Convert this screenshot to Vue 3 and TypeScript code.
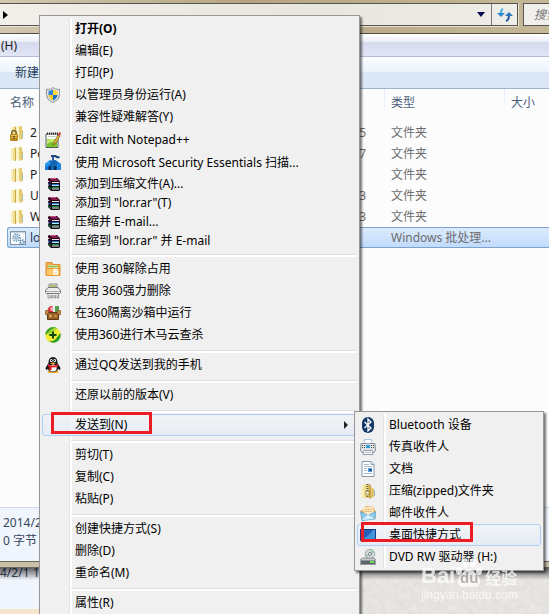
<script setup lang="ts">
interface FileRow { icon: string; name: string; date: string; type: string; selected?: boolean }
interface MenuItem { label: string; icon?: string; bold?: boolean; open?: boolean; marked?: boolean }
interface MenuGroup { size: string; items: MenuItem[] }

const folder = '<path d="M1 3l5-2v14l-5-1z" fill="#efdf94"/><path d="M1 3l2-1v12l-2-.5z" fill="#f8efbd"/><path d="M5 2l6-1v11l-6 3z" fill="#f3e39c"/><path d="M5 2h1v13H5z" fill="#c9a949"/><path d="M6 2l3-.5v12L6 15z" fill="#fbf3c4"/><path d="M9 1.500l3-.5v11l-3 2z" fill="#e5cc73"/><path d="M12 5l1 1v7l-1 1-3 1 3-3z" fill="#d4b45a"/><path d="M12.500 8v4" stroke="#9cc4c4"/>'
const books = '<path d="M3 3l1-1h8l3 3v9l-1 1H6l-3-3z" fill="#140c14"/><path d="M4 2h7l3 3H7z" fill="#8e1650"/><path d="M5 2.500h6" stroke="#c2517f"/><path d="M3 4l3 2.500" stroke="#b0124e"/><path d="M7 6.500h7" stroke="#f3dbe4"/><path d="M14.500 5v2" stroke="#8e1650"/><path d="M3 7l3 2.500" stroke="#2a49c8"/><path d="M7 8.500h7" stroke="#2f6fd8"/><path d="M7 9.500h7" stroke="#a9f0f4"/><path d="M3 10.500L6 13" stroke="#118a4a"/><path d="M7 11.500h7" stroke="#1c9350"/><path d="M7 13h7" stroke="#e6f7e9"/><path d="M3.500 5v1M3.500 8.500v1" stroke="#e8e8e8"/>'

const icons: Record<string, string> = {
  folder,
  locked: folder + '<path d="M1.800 10V8q0-2.500 2.200-2.500T6.200 8v2" fill="none" stroke="#7d6428" stroke-width="1.500"/><rect x="0" y="9" width="8" height="7" rx="1" fill="#b98a22"/><path d="M1 10.500h6M1 12.500h6" stroke="#e4c257"/><path d="M4 11v3" stroke="#5d3e08"/>',
  batch: '<rect x=".5" y="1.500" width="15" height="13" fill="#fafcff" stroke="#8797a9"/><path d="M1 2.500h14" stroke="#c7d4e2"/><circle cx="6.500" cy="7.500" r="3.500" fill="none" stroke="#6c94b5" stroke-width="1.500" stroke-dasharray="1.500 .8"/><circle cx="6.500" cy="7.500" r="1.600" fill="#d9e9f4" stroke="#5681a5"/><circle cx="12" cy="12" r="2" fill="#dcecf5" stroke="#4c7899" stroke-width="1.500" stroke-dasharray="1.300 .8"/>',
  shield: '<path d="M8 0l2 1.500 5 .5v5q0 6-7 9-7-3-7-9V2l5-.5z" fill="#8d949b"/><path d="M8 1l2 1.300 4 .7v4q0 5-6 8-6-3-6-8V3l4-.7z" fill="#e1e5e8"/><path d="M8 2.500V8H3.500V4z" fill="#2f86d6"/><path d="M8 2.500L12.500 4v4H8z" fill="#ffd53b"/><path d="M3.500 8H8v5.500Q4 11.500 3.500 8z" fill="#fcc61c"/><path d="M8 8h4.500q-.5 3.500-4.500 5.500z" fill="#1c70c6"/>',
  notepad: '<path d="M1 2h12v13.500H1z" fill="#fdfdfd" stroke="#565b57"/><path d="M2 1.500h11" stroke="#222" stroke-width="2" stroke-dasharray="1 1"/><path d="M3 4.500h8" stroke="#c5cfc8"/><path d="M2 7h10v8H2z" fill="#7cc22a"/><path d="M2 8q5-2 10 0v2Q6 9 2 12z" fill="#c2e86a"/><path d="M8 12l5-9 2 1-5 8-2 1z" fill="#f1bf35" stroke="#6d5424" stroke-width=".7"/><path d="M13 2.500L14.500 0 16 1l-1 3z" fill="#d2402c"/>',
  castle: '<path d="M0 9l5-4 2 1V1h1v4l4 1 4 3v6H0z" fill="#1478d8"/><path d="M6 0h5l1 1 3 .5-1 2-3-.5-1-1H6z" fill="#1d4683"/><path d="M7 2v4l2-1V2z" fill="#2c5b98"/><path d="M0 9l5-4v4l-5 3z" fill="#2e9bf0"/><path d="M5 6l6-1 1 3v7H5z" fill="#1464b4"/><path d="M12 7l4 2v6h-4z" fill="#2085de"/><path d="M3.500 15v-3q1.200-2 2.500 0v3zM9 15v-3q1.200-2 2.500 0v3z" fill="#062a5a"/>',
  books,
  orange: '<path d="M1 1.500h6l1 2h7v11H1z" fill="#f0a848" stroke="#dd9434"/><path d="M3 4h10v3H3z" fill="#fff7cf"/><path d="M3 5.500h10" stroke="#9cbf52" stroke-width="2"/><path d="M1.500 7.500h13v7h-13z" fill="#fbc86a" stroke="#e69a35"/><path d="M12.500 8.500H9v4.500h3.500v-2.500H9" fill="none" stroke="#fff" stroke-width="1.300"/>',
  shredder: '<path d="M4 5V1h8v5" fill="#e9efdf" stroke="#888"/><path d="M5 3h6" stroke="#b0bd6c" stroke-width="2"/><path d="M3 4.500h10l2.500 3v2l-1 1h-13l-1-1v-2z" fill="#ededed" stroke="#777"/><path d="M1 8.500h14" stroke="#a8a8a8"/><path d="M3 11v4h2v-3M6 12v3h1.500v-3M9 12v3h1.500v-3M12 12v3h1.500v-4" fill="none" stroke="#858585" stroke-width=".8"/>',
  sandbox: '<path d="M3 5q0-4 4-4l3 3v4H3z" fill="#d8303c"/><path d="M5 3q2-2 3 0v3H6z" fill="#f5a9bb"/><path d="M10 1h4v6h-4z" fill="#52a357"/><path d="M8 2h2v5H8z" fill="#e5f1ed"/><path d="M2.500 7.500h11v7h-11z" fill="#9b6124" stroke="#5f3a15"/><path d="M0 6l3-1 1 2-2 3-2-1zM16 6l-3-1-1 2 2 3 2-1z" fill="#c48a47" stroke="#7b4d20" stroke-width=".7"/><path d="M4 11h3M9 11h3M5.500 9.500v3" stroke="#e4b777"/>',
  plus360: '<circle cx="8" cy="8" r="7.800" fill="#f3ea38"/><path d="M3 2Q8-2 13 2 8 0 5 4q-4 4-4.500 4Q0 5 3 2z" fill="#33a52c"/><path d="M15.500 6q1 6-4 9-4 2-8-1 5 1 8-3 3-4 4-5z" fill="#2a9d26"/><path d="M4 4q4-3 8-1-5 1-9 6z" fill="#9bd631"/><path d="M8 4.500v7M4.500 8h7" stroke="#0a4a10" stroke-width="2"/>',
  qq: '<ellipse cx="8" cy="14.500" rx="5.500" ry="1.500" fill="#f2a819"/><path d="M3.500 6q0-6 4.500-6t4.500 6l3 5-.5 2-2-1q-1 3-5 3t-5-3l-2 1-.5-2z" fill="#15161a"/><ellipse cx="8" cy="11" rx="3.700" ry="3.500" fill="#fff"/><ellipse cx="6.300" cy="3.500" rx="1.300" ry="1.500" fill="#fff"/><ellipse cx="9.700" cy="3.500" rx="1.300" ry="1.500" fill="#fff"/><path d="M6.500 3v1M9.500 3v1" stroke="#111"/><path d="M5 6q3-1 6 0L8 7.500z" fill="#f8b324"/><path d="M3 7q5 3 10 0v2.500q-5 2-10 0z" fill="#e22424"/><path d="M4 9h2.500v4H4z" fill="#cf1b1b"/>',
  bluetooth: '<rect x="2" width="12" height="16" rx="6" fill="#123769"/><path d="M4.500 5l6.500 6-3 3V2l3 3-6.500 6" fill="none" stroke="#fff" stroke-width="1.300"/>',
  fax: '<path d="M4.500 5V.5h7V5" fill="#fff" stroke="#b7c3ce"/><path d="M1 4.500h14l.5 7-1.500 2H2L.5 11.500z" fill="#dfe2e4" stroke="#8a949b"/><path d="M6 6h4v3H6z" fill="#3aa0dc"/><path d="M2 6.500h3M2 8.500h3M11 6.500h3M11 8.500h3" stroke="#555" stroke-dasharray="1 1"/><path d="M4 11.500h8l1 4H3z" fill="#fff" stroke="#8f9daa"/><path d="M5 13.500h6" stroke="#adbbc6"/>',
  document: '<path d="M2 .5h9l3 3v12H2z" fill="#fff" stroke="#8498a8"/><path d="M11 .5v3h3" fill="#d8e7f2" stroke="#8ca0af"/><path d="M4 3.500h5M4 5.500h8M4 7.500h3M4 9.500h3M4 12.500h8" stroke="#a9bccf"/><path d="M8 7h4v4H8z" fill="#5ea2dc"/><path d="M9 8h3v2H9z" fill="#1e5da8"/>',
  zip: '<path d="M1 3l4-2v13l-4 1z" fill="#f8efbd"/><path d="M4 2l2-1 4 1v13H4z" fill="#ecd98a"/><path d="M9 1l2 1v13l-2 1z" fill="#c9a949"/><path d="M11 4l3 2v8l-3 1z" fill="#e0c469"/><path d="M14.500 7v6" stroke="#8fb7ba"/><path d="M7.500 1v14" stroke="#6d6132" stroke-width="2" stroke-dasharray="1 1"/><path d="M6 8h3v4H6z" fill="#f8f4d8" stroke="#86712e" stroke-width=".7"/>',
  mail: '<path d="M.5 6L6 1l7 .5L15.500 6v8L2 15.500z" fill="#eeb25c"/><path d="M2.500 3l10-1.500L14 9l-9 3z" fill="#fdeecb"/><path d="M4 5l8-1M4 7l8-1" stroke="#e8b774"/><path d="M.5 6.500L8 10.500l7.500-4-.5 7.500-13 1.500z" fill="#8fcaeb" stroke="#4d99c6" stroke-width=".7"/><path d="M2 15l6-5.500 6.500 4.500z" fill="#d3effb"/>',
  desktop: '<path d="M0 2h16v12H0z" fill="#173d87"/><path d="M1 3h14v9H1z" fill="#2460bb"/><path d="M1 12Q9 10 13 3h2v9z" fill="#3f93dc"/><path d="M0 13.500h16" stroke="#50734e"/>',
  dvd: '<circle cx="10" cy="5" r="4.800" fill="#d3dad8" stroke="#8a9494" stroke-width=".7"/><path d="M10 5l1-4.500 3.500 3z" fill="#9ed2b1"/><path d="M10 5L6 8l-.7-2z" fill="#8fbfa5"/><circle cx="10" cy="5" r="1.500" fill="#fff" stroke="#778"/><path d="M2 9h12l2 2v4.500H0V11z" fill="#c3c8ca" stroke="#747a80" stroke-width=".7"/><path d="M1 11.500h14V15H1z" fill="#5d646a"/><path d="M10 13h4" stroke="#62e34e" stroke-width="2"/>',
}

const files: FileRow[] = [
  { icon: 'locked', name: '2', date: '5', type: '文件夹' },
  { icon: 'folder', name: 'Po', date: '7', type: '文件夹' },
  { icon: 'folder', name: 'P', date: '', type: '文件夹' },
  { icon: 'folder', name: 'U', date: '3', type: '文件夹' },
  { icon: 'folder', name: 'W', date: '3', type: '文件夹' },
  { icon: 'batch', name: 'lo', date: '', type: 'Windows 批处理...', selected: true },
]

const groups: MenuGroup[] = [
  { size: 'regular', items: [
    { label: '打开(O)', bold: true }, { label: '编辑(E)' }, { label: '打印(P)' },
    { label: '以管理员身份运行(A)', icon: 'shield' }, { label: '兼容性疑难解答(Y)' },
  ] },
  { size: 'tall', items: [
    { label: 'Edit with Notepad++', icon: 'notepad' },
    { label: '使用 Microsoft Security Essentials 扫描...', icon: 'castle' },
  ] },
  { size: 'short', items: [
    { label: '添加到压缩文件(A)...', icon: 'books' }, { label: '添加到 "lor.rar"(T)', icon: 'books' },
    { label: '压缩并 E-mail...', icon: 'books' }, { label: '压缩到 "lor.rar" 并 E-mail', icon: 'books' },
  ] },
  { size: 'regular ruled', items: [
    { label: '使用 360解除占用', icon: 'orange' }, { label: '使用 360强力删除', icon: 'shredder' },
    { label: '在360隔离沙箱中运行', icon: 'sandbox' }, { label: '使用360进行木马云查杀', icon: 'plus360' },
  ] },
  { size: 'regular ruled', items: [{ label: '通过QQ发送到我的手机', icon: 'qq' }] },
  { size: 'regular ruled', items: [{ label: '还原以前的版本(V)' }] },
  { size: 'regular ruled', items: [{ label: '发送到(N)', open: true, marked: true }] },
  { size: 'regular ruled', items: [{ label: '剪切(T)' }, { label: '复制(C)' }, { label: '粘贴(P)' }] },
  { size: 'regular ruled', items: [{ label: '创建快捷方式(S)' }, { label: '删除(D)' }, { label: '重命名(M)' }] },
  { size: 'regular ruled', items: [{ label: '属性(R)' }] },
]

const targets: MenuItem[] = [
  { label: 'Bluetooth 设备', icon: 'bluetooth' }, { label: '传真收件人', icon: 'fax' },
  { label: '文档', icon: 'document' }, { label: '压缩(zipped)文件夹', icon: 'zip' },
  { label: '邮件收件人', icon: 'mail' }, { label: '桌面快捷方式', icon: 'desktop', open: true, marked: true },
  { label: 'DVD RW 驱动器 (H:)', icon: 'dvd' },
]
</script>

<template>
  <div class="screen">
    <header class="address-row">
      <div class="address">
        <button class="crumb" aria-label="▶"><svg width="5" height="8" viewBox="0 0 5 8"><path d="M0 0l5 4-5 4z" fill="#000" /></svg></button>
        <button class="history" aria-label="▼"><svg width="8" height="5" viewBox="0 0 8 5"><path d="M0 0h8L4 5z" fill="#06064e" /></svg></button>
        <button class="refresh" aria-label="↻">
          <svg width="16" height="14" viewBox="0 0 16 14"><path d="M6 1Q3.500 2 4 6" fill="none" stroke="#46b2df" stroke-width="2" /><path d="M0 5h8L4 9z" fill="#2f86c9" /><path d="M9 13q3-1 3-6" fill="none" stroke="#24569f" stroke-width="2" /><path d="M8 8l4-4 4 4z" fill="#2c77c3" /></svg>
        </button>
      </div>
      <input class="search" type="text" placeholder="搜索" aria-label="搜索">
    </header>
    <nav class="menubar"><button>(H)</button></nav>
    <div class="toolbar"><button>新建</button></div>
    <main class="listing">
      <table>
        <thead><tr><th class="name">名称</th><th class="date"></th><th class="type">类型</th><th>大小</th></tr></thead>
        <tbody>
          <tr v-for="(file, i) in files" :key="i" :class="{ selected: file.selected }">
            <td class="name"><span class="file"><svg width="16" height="16" viewBox="0 0 16 16" v-html="icons[file.icon]" />{{ file.name }}</span></td>
            <td class="date">{{ file.date }}</td>
            <td class="type">{{ file.type }}</td>
            <td></td>
          </tr>
        </tbody>
      </table>
    </main>
    <footer class="details"><span>2014/2</span><span>0 字节</span></footer>
    <div class="frame"></div>
    <div class="behind">
      <div class="other"><span>4/2/1 1</span></div>
      <svg class="stone" width="100%" height="100%">
        <filter id="grain" x="0" y="0" width="100%" height="100%"><feTurbulence type="fractalNoise" baseFrequency=".16" numOctaves="3" seed="8" /><feColorMatrix values=".12 0 0 0 .73  .12 0 0 0 .71  .12 0 0 0 .69  0 0 0 0 1" /></filter>
        <rect width="100%" height="100%" filter="url(#grain)" />
      </svg>
    </div>

    <div class="popup context" role="menu">
      <div v-for="(group, g) in groups" :key="g" class="group" :class="group.size">
        <button v-for="item in group.items" :key="item.label" class="item" :class="{ bold: item.bold, open: item.open }" role="menuitem">
          <span class="glyph"><svg v-if="item.icon" width="16" height="16" viewBox="0 0 16 16" v-html="icons[item.icon]" /></span>
          <span class="label">{{ item.label }}</span>
          <svg v-if="item.open" class="arrow" width="4" height="8" viewBox="0 0 4 8"><path d="M0 0l4 4-4 4z" fill="#222" /></svg>
          <span v-if="item.marked" class="mark"></span>
        </button>
      </div>
    </div>

    <div class="popup sendto" role="menu">
      <div class="group regular">
        <button v-for="item in targets" :key="item.label" class="item" :class="{ open: item.open }" role="menuitem">
          <span class="glyph"><svg width="16" height="16" viewBox="0 0 16 16" v-html="icons[item.icon!]" /></span>
          <span class="label">{{ item.label }}</span>
          <span v-if="item.marked" class="mark"></span>
        </button>
      </div>
    </div>

    <div class="watermark">
      <div class="brand">
        <span>Bai</span>
        <span class="paw">
          <svg width="28" height="30" viewBox="0 0 28 30"><g fill="#fff"><ellipse cx="4" cy="13" rx="3" ry="4" /><ellipse cx="10" cy="5" rx="3" ry="5" /><ellipse cx="18" cy="5" rx="3" ry="5" /><ellipse cx="24" cy="13" rx="3" ry="4" /><path d="M14 11q4 0 7 5 5 4 4 9-2 5-7 4-4-1-8 0-6 1-7-4-1-5 4-9 3-5 7-5z" /></g></svg>
          <span class="du">du</span>
        </span>
        <span class="cn">经验</span>
      </div>
      <div class="site">jingyan.baidu.com</div>
    </div>
  </div>
</template>

<style>
body { margin: 0; }
</style>

<style scoped>
.screen {
  position: relative;
  display: flex;
  flex-direction: column;
  min-height: 100vh;
  overflow: hidden;
  background: #fcfcfc;
  color: #000;
  font-family: "Noto Sans", "Noto Sans CJK SC", sans-serif;
  font-size: 12px;
  line-height: 18px;
}
.screen * { box-sizing: border-box; }
button { margin: 0; padding: 0; border: 0; background: none; color: inherit; font: inherit; text-align: left; }
svg { display: block; flex: none; }

.address-row {
  display: flex;
  gap: 5px;
  height: 34px;
  padding: 3px 0 7px;
  border-bottom: 1px solid #554b43;
  background: linear-gradient(90deg, #d2c8b0, #b5a583 45%, #c4b897);
}
.address { display: flex; flex: 1; border: 1px solid #575550; border-left: 0; background: linear-gradient(90deg, #f1efe9, #e9e5df 60%, #efede8); box-shadow: 0 1px #e8e1d2, 1px 0 #e8e1d2; }
.crumb { display: flex; flex: 1; align-items: center; padding-left: 3px; }
.history { display: flex; align-items: center; justify-content: center; width: 20px; }
.refresh { display: flex; align-items: center; justify-content: center; width: 26px; border-left: 1px solid #777; }
.search { width: 26px; min-width: 0; padding: 0 0 0 10px; border: 1px solid #575550; border-right: 0; border-radius: 0; background: #f1efeb; font: italic 12px "Noto Sans", "Noto Sans CJK SC", sans-serif; outline: 0; }
.search::placeholder { color: #777; opacity: 1; }
.menubar { display: flex; align-items: center; height: 23px; padding: 1px 0 0 1px; border-bottom: 1px solid #b6bad0; background: linear-gradient(#fff, #eceff9 34%, #d5daec 36%, #e1e5f6); color: #222; }
.toolbar { display: flex; align-items: center; height: 32px; padding-left: 15px; border-bottom: 1px solid #9eb3d0; background: linear-gradient(#fbfdff, #ebf4fd 48%, #dce7f5 50%, #dce7f5); color: #1e395b; }

.listing { flex: 1; padding-left: 7px; }
table { width: 100%; border-spacing: 0; table-layout: fixed; color: #6d6d6d; }
th, td { padding: 0; font-weight: normal; text-align: left; white-space: nowrap; }
th { height: 33px; padding-bottom: 5px; color: #4c607a; }
th.date, th.type { background: linear-gradient(#dce9f5, #fcfcfc) right top / 1px 24px no-repeat; }
td { height: 21px; }
.name { width: 233px; padding-left: 3px; }
.date { width: 145px; padding-right: 19px; text-align: right; }
.type { width: 120px; }
th.type, td.type, th:last-child { padding-left: 6px; }
.file { display: flex; align-items: center; gap: 4px; color: #222; }
.selected td { border: solid #7da2ce; border-width: 1px 0; background: linear-gradient(#dcebfc, #c1dbfc); }
.selected td.name { padding-left: 2px; border-left-width: 1px; border-radius: 3px 0 0 3px; }
.selected .file { color: #1e395b; }

.details { display: flex; flex-direction: column; height: 54px; padding: 6px 3px; border-top: 1px solid #ccd9ea; background: #f0f4fc; color: #33475e; }
.frame { height: 7px; border: solid #6d665a; border-width: 1px 0; background: #c8c0a9; }
.behind { position: relative; display: flex; height: 46px; }
.behind::before { content: ""; position: absolute; inset: 0 0 auto; height: 12px; background: linear-gradient(#0009, #0000); }
.other { width: 355px; border-bottom: 5px solid #f5e5cd; background: #f0f4fc; color: #33475e; line-height: 10px; }
.stone { flex: 1; width: 0; }

.popup { position: absolute; padding: 2px; border: 1px solid #979797; background: #f0f0f0; box-shadow: 2px 2px 2px #0008; }
.popup::before { content: ""; position: absolute; inset: 2px auto 2px 29px; width: 2px; border-left: 1px solid #e2e3e3; background: #fff; }
.context { top: 15px; left: 39px; width: 321px; }
.sendto { top: 411px; left: 354px; width: 190px; }
.sendto::before { left: 28px; }
.group { position: relative; }
.ruled { padding-top: 8px; }
.ruled::before { content: ""; position: absolute; top: 4px; left: 29px; right: 0; height: 2px; border-top: 1px solid #e0e0e0; background: #fff; }
.item { position: relative; display: flex; align-items: center; width: 100%; height: 22px; white-space: nowrap; }
.tall .item { height: 23px; }
.short .item { height: 19px; }
.glyph { display: flex; justify-content: center; width: 22px; }
.label { flex: 1; padding-left: 11px; }
.sendto .label { padding-left: 10px; }
.bold { font-weight: bold; }
.open::before { content: ""; position: absolute; inset: 0; border: 1px solid #aecff7; border-radius: 3px; background: linear-gradient(#f1f4f7cc, #e4ebf7cc); }
.open .glyph, .open .label { position: relative; }
.arrow { position: relative; margin-right: 9px; }
.mark { position: absolute; border: 3px solid #ed1c24; }
.context .mark { top: -2px; left: 9px; width: 101px; height: 22px; }
.sendto .mark { top: -2px; left: 4px; width: 112px; height: 20px; }

.watermark { position: absolute; top: 558px; left: 421px; color: #fff; opacity: .75; }
.brand { display: flex; align-items: end; height: 30px; font: bold 22px/24px "Liberation Sans", sans-serif; }
.paw { position: relative; }
.du { position: absolute; inset: 11px 0 0; color: #aaa49f; font-size: 15px; line-height: 18px; text-align: center; }
.cn { padding-left: 2px; font: bold 16px/22px "Noto Sans CJK SC", sans-serif; }
.site { font: 12px/14px "Liberation Sans", sans-serif; }
</style>
